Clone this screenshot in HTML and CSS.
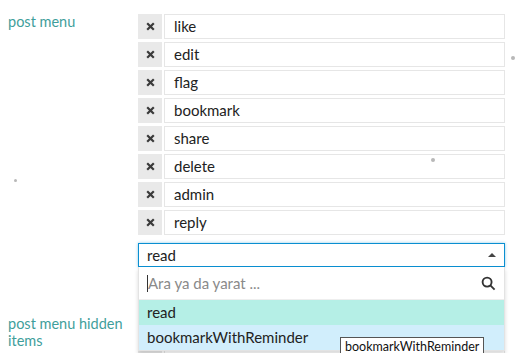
FILE: index.html
```html
<!DOCTYPE html>
<html lang="tr">
<head>
  <meta charset="UTF-8">
  <title>post menu</title>
  <link rel="stylesheet" href="styles.css">
</head>
<body>
  <!-- Réglage : post menu -->
  <div class="setting first">
    <div class="setting-label">post menu</div>
    <div class="setting-value">
      <div class="row"><span class="remove"><svg viewBox="0 0 10 10"><path d="M2 2L8 8M8 2L2 8"/></svg></span><span class="value">like</span></div>
      <div class="row"><span class="remove"><svg viewBox="0 0 10 10"><path d="M2 2L8 8M8 2L2 8"/></svg></span><span class="value">edit</span></div>
      <div class="row"><span class="remove"><svg viewBox="0 0 10 10"><path d="M2 2L8 8M8 2L2 8"/></svg></span><span class="value">flag</span></div>
      <div class="row"><span class="remove"><svg viewBox="0 0 10 10"><path d="M2 2L8 8M8 2L2 8"/></svg></span><span class="value">bookmark</span></div>
      <div class="row"><span class="remove"><svg viewBox="0 0 10 10"><path d="M2 2L8 8M8 2L2 8"/></svg></span><span class="value">share</span></div>
      <div class="row"><span class="remove"><svg viewBox="0 0 10 10"><path d="M2 2L8 8M8 2L2 8"/></svg></span><span class="value">delete</span></div>
      <div class="row"><span class="remove"><svg viewBox="0 0 10 10"><path d="M2 2L8 8M8 2L2 8"/></svg></span><span class="value">admin</span></div>
      <div class="row"><span class="remove"><svg viewBox="0 0 10 10"><path d="M2 2L8 8M8 2L2 8"/></svg></span><span class="value">reply</span></div>

      <div class="select-kit">
        <div class="select-header">
          <span>read</span>
          <svg class="caret" viewBox="0 0 10 10"><path d="M1 7L5 3L9 7Z"/></svg>
        </div>
        <div class="select-body">
          <div class="filter">
            <span class="cursor"></span>
            <span class="placeholder">Ara ya da yarat ...</span>
            <svg class="search" viewBox="0 0 16 16"><circle cx="6.5" cy="6.5" r="4.8"/><path d="M10 10L14.5 14.5"/></svg>
          </div>
          <div class="option highlighted">read</div>
          <div class="option hovered">bookmarkWithReminder</div>
        </div>
      </div>
    </div>
  </div>

  <!-- Réglage : post menu hidden items -->
  <div class="setting">
    <div class="setting-label">post menu hidden items</div>
    <div class="setting-value hidden-list">
      <div class="row"><span class="remove"><svg viewBox="0 0 10 10"><path d="M2 2L8 8M8 2L2 8"/></svg></span><span class="value">flag</span></div>
      <div class="row"><span class="remove"><svg viewBox="0 0 10 10"><path d="M2 2L8 8M8 2L2 8"/></svg></span><span class="value">bookmark</span></div>
    </div>
  </div>

  <div class="tooltip">bookmarkWithReminder</div>
  <span class="dot dot-a"></span>
  <span class="dot dot-b"></span>
  <span class="dot dot-c"></span>
</body>
</html>
```

FILE: styles.css
```css
/* Style général */
body {
  font-family: Lato, "Open Sans", sans-serif;
  font-size: 15px;
  color: #222;
  margin: 0;
  background: #fff;
  height: 353px;
  overflow: hidden;
}

/* Réglages */
.setting {
  display: flex;
  padding-left: 8px;
}
.setting.first {
  padding-top: 14px;
  margin-bottom: 49px;
}
.setting-label {
  width: 130px;
  line-height: 17px;
  margin-top: -1px;
  padding-right: 10px;
  box-sizing: border-box;
  font-size: 14.5px;
  color: #3f9e9b;
}
.setting-value {
  width: 367px;
}
.hidden-list {
  padding-top: 6px;
}

/* Lignes de la liste */
.row {
  display: flex;
  height: 25px;
  margin-bottom: 3px;
}
.remove {
  width: 24px;
  background: #e9e9e9;
  display: flex;
  align-items: center;
  justify-content: center;
}
.remove svg {
  width: 11px;
  height: 11px;
  stroke: #3a3a3a;
  stroke-width: 2;
}
.value {
  flex: 1;
  margin-left: 2px;
  border: 1px solid #e6e6e6;
  padding-left: 9px;
  line-height: 23px;
}

/* Liste déroulante */
.select-kit {
  position: relative;
  margin-top: 8px;
  z-index: 2;
}
.select-header {
  height: 24px;
  box-sizing: border-box;
  border: 1px solid #0a8fd1;
  box-shadow: 0 0 3px rgba(10, 143, 209, 0.45);
  display: flex;
  align-items: center;
  padding: 0 8px;
  background: #fff;
}
.select-header span {
  flex: 1;
}
.caret {
  width: 10px;
  height: 10px;
  fill: #444;
  margin-right: -1px;
}
.select-body {
  position: absolute;
  top: 24px;
  left: 0;
  right: 0;
  background: #fff;
  border: 1px solid #e3e3e3;
  border-top: none;
  box-shadow: 0 3px 4px rgba(0, 0, 0, 0.15);
}
.filter {
  height: 32px;
  display: flex;
  align-items: center;
  padding: 0 8px;
  border-bottom: 1px solid #eee;
}
.cursor {
  width: 1px;
  height: 17px;
  background: #333;
}
.placeholder {
  flex: 1;
  color: #8a8a8a;
}
.search {
  width: 15px;
  height: 15px;
  fill: none;
  stroke: #333;
  stroke-width: 2;
}
.option {
  height: 25px;
  line-height: 24px;
  padding-left: 8px;
}
.option.highlighted {
  background: #b5efe6;
}
.option.hovered {
  background: #d1eefc;
}

/* Info-bulle du navigateur */
.tooltip {
  position: absolute;
  left: 340px;
  top: 337px;
  z-index: 3;
  background: #fff;
  border: 1px solid #555;
  font-size: 12.5px;
  line-height: 16px;
  padding: 1px 4px 2px;
  color: #111;
}

/* Petits points */
.dot {
  position: absolute;
  width: 4px;
  height: 4px;
  border-radius: 50%;
  background: #b8b8b8;
}
.dot-a { left: 511px; top: 56px; }
.dot-b { left: 431px; top: 158px; }
.dot-c { left: 14px; top: 179px; width: 3px; height: 3px; }
```
